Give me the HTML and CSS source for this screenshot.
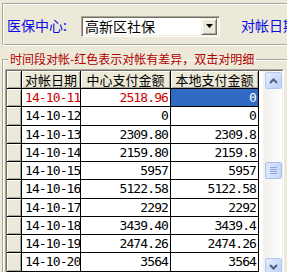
FILE: index.html
```html
<!DOCTYPE html>
<html lang="zh-CN">
<head>
    <meta charset="UTF-8">
    <meta name="viewport" content="width=device-width, initial-scale=1.0">
    <title>时间段对帐</title>
    <link rel="stylesheet" href="styles.css">
</head>
<body>
    <div class="toolbar">
        <span class="lbl">医保中心:</span>
        <div class="combo">
            <span class="combo-text">高新区社保</span>
            <span class="combo-btn">
                <svg width="7" height="4" viewBox="0 0 7 4"><path d="M0 0h7L3.5 4z" fill="#000"/></svg>
            </span>
        </div>
        <span class="lbl lbl-date">对帐日期</span>
    </div>

    <fieldset class="group">
        <legend>时间段对帐-红色表示对帐有差异，双击对明细</legend>
        <div class="grid">
            <div class="grid-in">
                <div class="rows">
                    <div class="row head">
                        <div class="ind"></div>
                        <div class="hd">对帐日期</div>
                        <div class="hd">中心支付金额</div>
                        <div class="hd">本地支付金额</div>
                    </div>
                    <div class="row diff">
                        <div class="ind"></div>
                        <div class="date">14-10-11</div>
                        <div class="num">2518.96</div>
                        <div class="num sel">0</div>
                    </div>
                    <div class="row">
                        <div class="ind"></div>
                        <div class="date">14-10-12</div>
                        <div class="num">0</div>
                        <div class="num">0</div>
                    </div>
                    <div class="row">
                        <div class="ind"></div>
                        <div class="date">14-10-13</div>
                        <div class="num">2309.80</div>
                        <div class="num">2309.8</div>
                    </div>
                    <div class="row">
                        <div class="ind"></div>
                        <div class="date">14-10-14</div>
                        <div class="num">2159.80</div>
                        <div class="num">2159.8</div>
                    </div>
                    <div class="row">
                        <div class="ind"></div>
                        <div class="date">14-10-15</div>
                        <div class="num">5957</div>
                        <div class="num">5957</div>
                    </div>
                    <div class="row">
                        <div class="ind"></div>
                        <div class="date">14-10-16</div>
                        <div class="num">5122.58</div>
                        <div class="num">5122.58</div>
                    </div>
                    <div class="row">
                        <div class="ind"></div>
                        <div class="date">14-10-17</div>
                        <div class="num">2292</div>
                        <div class="num">2292</div>
                    </div>
                    <div class="row">
                        <div class="ind"></div>
                        <div class="date">14-10-18</div>
                        <div class="num">3439.40</div>
                        <div class="num">3439.4</div>
                    </div>
                    <div class="row">
                        <div class="ind"></div>
                        <div class="date">14-10-19</div>
                        <div class="num">2474.26</div>
                        <div class="num">2474.26</div>
                    </div>
                    <div class="row">
                        <div class="ind"></div>
                        <div class="date">14-10-20</div>
                        <div class="num">3564</div>
                        <div class="num">3564</div>
                    </div>
                </div>

                <div class="vscroll">
                    <div class="sb-btn">
                        <svg width="9" height="6" viewBox="0 0 9 6"><path d="M1 5l3.5-3.5L8 5" fill="none" stroke="#4d6185" stroke-width="2"/></svg>
                    </div>
                    <div class="sb-thumb"><i></i><i></i><i></i><i></i></div>
                    <div class="sb-track"></div>
                    <div class="sb-btn">
                        <svg width="9" height="6" viewBox="0 0 9 6"><path d="M1 1l3.5 3.5L8 1" fill="none" stroke="#4d6185" stroke-width="2"/></svg>
                    </div>
                </div>
            </div>
        </div>
    </fieldset>
</body>
</html>
```

FILE: styles.css
```css
body { margin: 0; background: #ece9d8; font-family: "Noto Sans CJK SC", "Noto Sans", sans-serif; overflow: hidden; width: 287px; height: 272px; }

/* верхняя панель */
.toolbar { display: flex; align-items: center; margin: 3px -10px 0 2px; height: 41px; padding-left: 4px; border-top: 1px solid #aca899; border-left: 1px solid #aca899; border-bottom: 1px solid #fff; box-shadow: inset 1px 1px 0 #fff, inset 0 -1px 0 #aca899; }
.lbl { color: #0a0ae6; font-size: 14px; line-height: 16px; white-space: nowrap; }
.lbl-date { margin-left: 21px; }
.combo { display: flex; align-items: center; justify-content: space-between; width: 134px; height: 17px; margin-left: 14px; margin-top: 3px; background: #fff; border: 1px solid; border-color: #aca899 #fff #fff #aca899; box-shadow: inset 1px 1px 0 #716f64, inset -1px -1px 0 #f1efe2; padding: 1px 2px 1px 2px; }
.combo-text { font-size: 14px; line-height: 16px; color: #000; padding-left: 1px; }
.combo-btn { display: flex; align-items: center; justify-content: center; width: 14px; height: 15px; background: #ece9d8; border: 1px solid; border-color: #f1efe2 #716f64 #716f64 #f1efe2; box-shadow: inset 1px 1px 0 #fff, inset -1px -1px 0 #aca899; }

/* рамка с заголовком */
.group { margin: 6px 0 0 2px; padding: 3px 0 0 2px; width: 290px; border: 1px solid #aca899; border-right: none; border-bottom: none; box-shadow: inset 1px 1px 0 #fff; }
.group legend { padding: 0 2px; margin-left: 3px; font-size: 12px; line-height: 14px; color: #b00000; }

/* таблица */
.grid { width: 277px; border: 1px solid; border-color: #aca899 #fff #fff #aca899; }
.grid-in { display: flex; height: 205px; overflow: hidden; background: #f4f3ee; border: 1px solid; border-color: #716f64 #f1efe2 #f1efe2 #716f64; }
.rows { width: 256px; flex-shrink: 0; background: #fff; }
.row { display: grid; grid-template-columns: 15px 59px 90px 88px; height: 18.25px; }
.row > div { border-right: 1px solid #000; border-bottom: 1px solid #000; overflow: hidden; white-space: nowrap; }
.row.head { height: 18px; }
.row > .hd { overflow: visible; }
.ind, .hd { background: #ece9d8; box-shadow: inset 1px 1px 0 #fff, inset -1px -1px 0 #aca899; }
.hd { font-size: 13px; line-height: 17px; text-align: center; color: #000; }
.date, .num { font-family: "DejaVu Sans Mono", "Liberation Mono", monospace; font-size: 13px; letter-spacing: -0.9px; line-height: 18px; color: #000; }
.date { padding-left: 3px; }
.num { text-align: right; padding-right: 2px; }
.diff .date, .diff .num { color: #cc0000; }
.num.sel { background: #316ac5; color: #fff; }

/* полоса прокрутки */
.vscroll { display: flex; flex-direction: column; width: 17px; margin-left: 2px; background: linear-gradient(to right, #f3f1ec, #fefefe); }
.sb-btn { display: flex; align-items: center; justify-content: center; height: 15px; margin: 1px 0; border: 1px solid #b6c9f5; border-radius: 2px; background: linear-gradient(to bottom right, #e4ecfd, #bccff8); }
.sb-thumb { display: flex; flex-direction: column; align-items: center; justify-content: center; gap: 1px; height: 15px; margin-top: 72px; border: 1px solid #a9bdef; border-radius: 2px; background: linear-gradient(to right, #dde7fd, #c6d6fb); }
.sb-thumb i { display: block; width: 7px; height: 1px; background: #8da5e3; }
.sb-track { flex: 1; }
```
